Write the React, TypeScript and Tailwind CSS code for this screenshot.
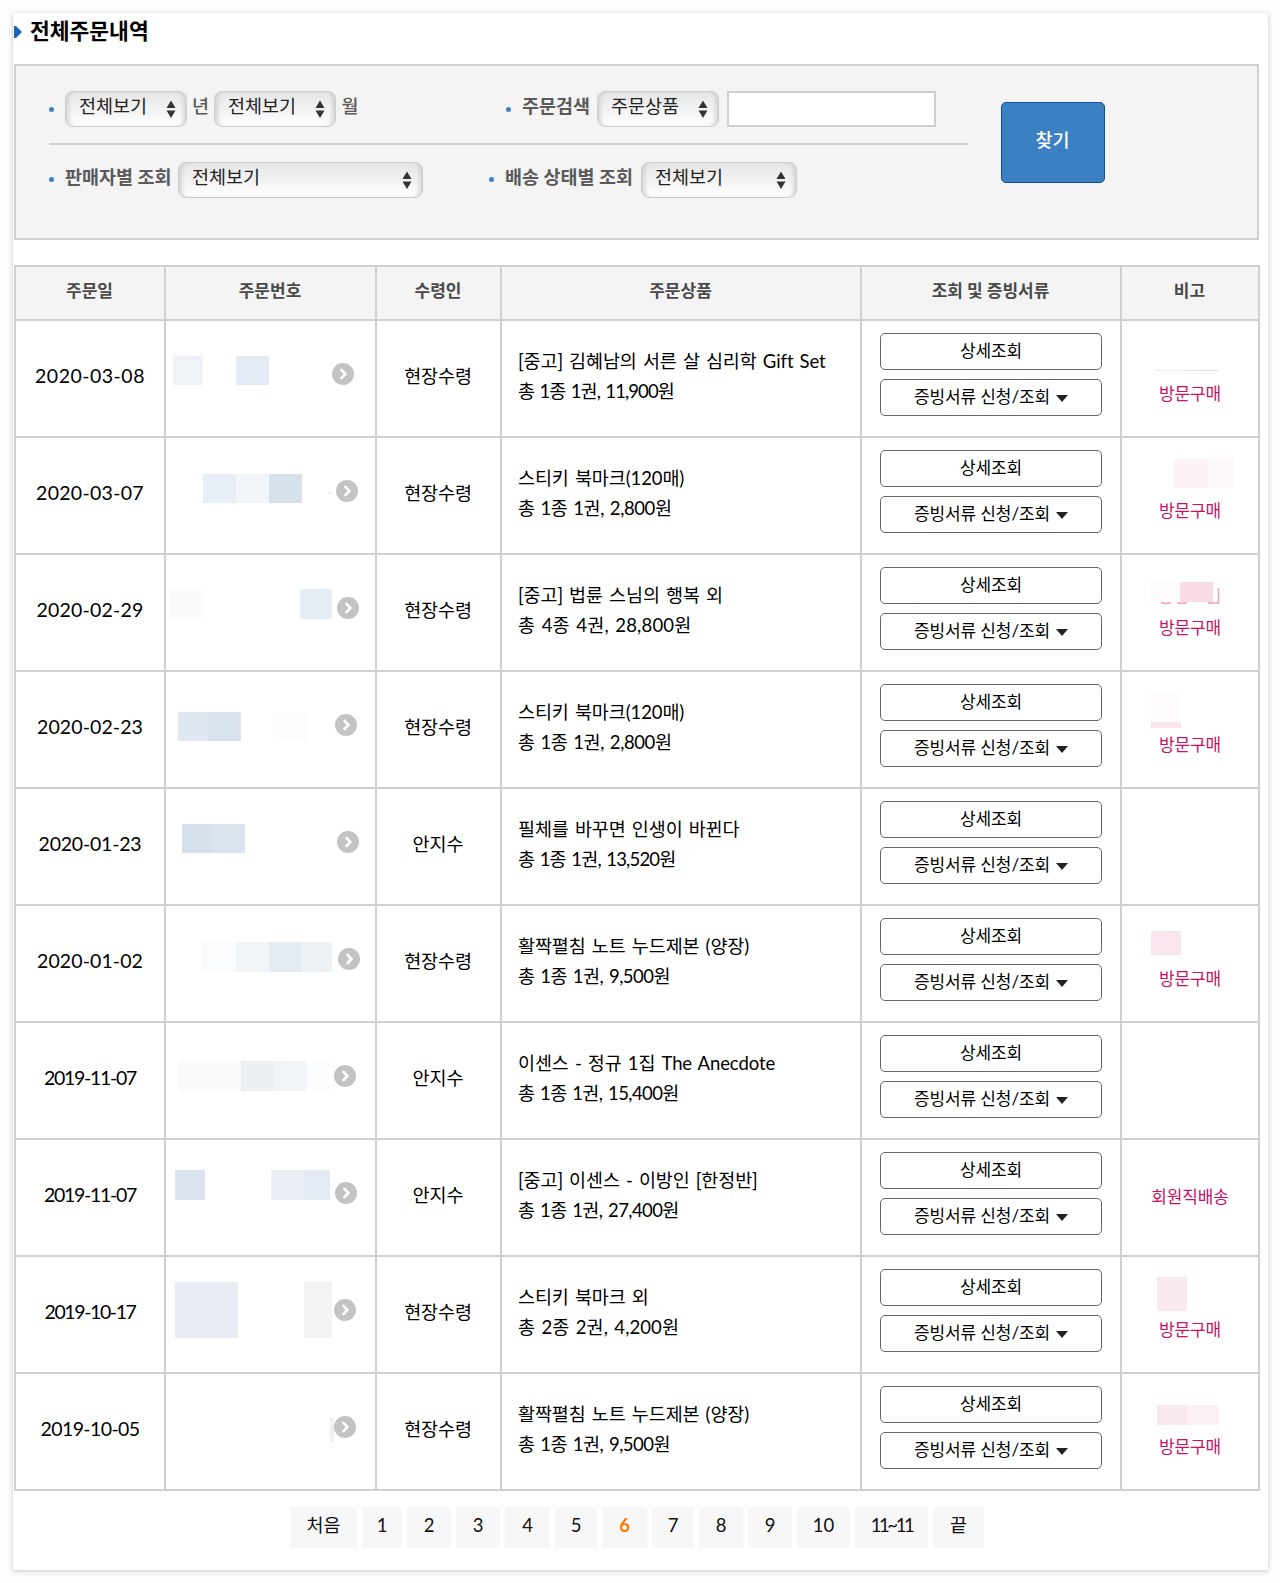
import React from 'react';

// x, y, width, height, colour
type Block = [number, number, number, number, string];

interface Order {
  date: string;
  dateTracking: string;
  arrow: number;
  blocks: Block[];
  receiver: string;
  title: string;
  summary: string;
  summaryTracking: string;
  note?: string;
  noteBlocks?: Block[];
  noteTrace?: boolean;
}

const ORDERS: Order[] = [
  {
    date: '2020-03-08', dateTracking: 'tracking-[0.5px]', arrow: 166,
    blocks: [[7, 35, 30, 29, '#eff3f8'], [70, 35, 33, 29, '#e4ebf4']],
    receiver: '현장수령',
    title: '[중고] 김혜남의 서른 살 심리학 Gift Set',
    summary: '총 1종 1권, 11,900원', summaryTracking: 'tracking-[-0.9px]',
    note: '방문구매',
    noteBlocks: [[33, 49, 30, 1, '#fbe6ee'], [63, 49, 33, 1, '#f8d3e1']],
  },
  {
    date: '2020-03-07', dateTracking: 'tracking-[0.3px]', arrow: 170,
    blocks: [[37, 36, 33, 29, '#e8eef5'], [70, 36, 33, 29, '#f2f5f9'], [103, 36, 33, 29, '#d6e1eb'], [163, 54, 2, 2, '#e6e9f4']],
    receiver: '현장수령',
    title: '스티키 북마크(120매)',
    summary: '총 1종 1권, 2,800원', summaryTracking: 'tracking-[-0.4px]',
    note: '방문구매',
    noteBlocks: [[52, 21, 33, 29, '#fcf2f6'], [85, 21, 27, 29, '#fdf9fb']],
  },
  {
    date: '2020-02-29', dateTracking: 'tracking-[0.2px]', arrow: 171,
    blocks: [[5, 34, 30, 30, '#f9fafc'], [134, 34, 32, 30, '#e5edf5']],
    receiver: '현장수령',
    title: '[중고] 법륜 스님의 행복 외',
    summary: '총 4종 4권, 28,800원', summaryTracking: 'tracking-[0.2px]',
    note: '방문구매',
    noteBlocks: [[29, 27, 29, 20, '#fdfafc'], [58, 27, 33, 20, '#f9dce8']],
    noteTrace: true,
  },
  {
    date: '2020-02-23', dateTracking: 'tracking-[0.1px]', arrow: 169,
    blocks: [[12, 40, 30, 29, '#dfe7f0'], [42, 40, 33, 29, '#d8e2ec'], [107, 40, 34, 30, '#fbfcfe']],
    receiver: '현장수령',
    title: '스티키 북마크(120매)',
    summary: '총 1종 1권, 2,800원', summaryTracking: 'tracking-[-0.4px]',
    note: '방문구매',
    noteBlocks: [[29, 20, 30, 29, '#fdfbfc'], [29, 50, 30, 6, '#f9e3ec']],
  },
  {
    date: '2020-01-23', dateTracking: 'tracking-[-0.2px]', arrow: 171,
    blocks: [[16, 35, 30, 29, '#d6e0ea'], [46, 35, 33, 29, '#dae4ed']],
    receiver: '안지수',
    title: '필체를 바꾸면 인생이 바뀐다',
    summary: '총 1종 1권, 13,520원', summaryTracking: 'tracking-[-0.8px]',
  },
  {
    date: '2020-01-02', dateTracking: 'tracking-[0.1px]', arrow: 172,
    blocks: [[36, 36, 34, 30, '#fafbfd'], [70, 36, 33, 30, '#f1f5f8'], [103, 36, 32, 30, '#e2eaf2'], [135, 36, 31, 30, '#edf2f7']],
    receiver: '현장수령',
    title: '활짝펼침 노트 누드제본 (양장)',
    summary: '총 1종 1권, 9,500원', summaryTracking: 'tracking-[-0.5px]',
    note: '방문구매',
    noteBlocks: [[29, 25, 30, 24, '#f9e6ee']],
  },
  {
    date: '2019-11-07', dateTracking: 'tracking-[-1.3px]', arrow: 168,
    blocks: [[12, 38, 63, 30, '#f9fafc'], [75, 38, 33, 30, '#ebf0f5'], [108, 38, 32, 30, '#f1f4f9'], [140, 38, 24, 30, '#fafcfe']],
    receiver: '안지수',
    title: '이센스 - 정규 1집 The Anecdote',
    summary: '총 1종 1권, 15,400원', summaryTracking: 'tracking-[-0.6px]',
  },
  {
    date: '2019-11-07', dateTracking: 'tracking-[-1.3px]', arrow: 169,
    blocks: [[9, 30, 30, 30, '#dbe4ee'], [105, 30, 33, 30, '#ebf0f6'], [138, 30, 26, 30, '#e3eaf3']],
    receiver: '안지수',
    title: '[중고] 이센스 - 이방인 [한정반]',
    summary: '총 1종 1권, 27,400원', summaryTracking: 'tracking-[-0.6px]',
    note: '회원직배송',
  },
  {
    date: '2019-10-17', dateTracking: 'tracking-[-1.4px]', arrow: 168,
    blocks: [[9, 25, 63, 56, '#e8ecf5'], [138, 25, 28, 56, '#f3f3f3']],
    receiver: '현장수령',
    title: '스티키 북마크 외',
    summary: '총 2종 2권, 4,200원', summaryTracking: 'tracking-[0.1px]',
    note: '방문구매',
    noteBlocks: [[35, 20, 30, 34, '#fae9f0']],
  },
  {
    date: '2019-10-05', dateTracking: 'tracking-[-0.6px]', arrow: 168,
    blocks: [[164, 44, 4, 24, '#f0f0f0']],
    receiver: '현장수령',
    title: '활짝펼침 노트 누드제본 (양장)',
    summary: '총 1종 1권, 9,500원', summaryTracking: 'tracking-[-0.5px]',
    note: '방문구매',
    noteBlocks: [[35, 31, 30, 20, '#fae8f0'], [65, 31, 32, 20, '#fbf1f5']],
  },
];

const PAGES = [
  { label: '처음', width: 'w-[67px]' },
  { label: '1', width: 'w-[40px]' },
  { label: '2', width: 'w-[44px]' },
  { label: '3', width: 'w-[44px]' },
  { label: '4', width: 'w-[45px]' },
  { label: '5', width: 'w-[42px]' },
  { label: '6', width: 'w-[45px]' },
  { label: '7', width: 'w-[42px]' },
  { label: '8', width: 'w-[44px]' },
  { label: '9', width: 'w-[44px]' },
  { label: '10', width: 'w-[53px]' },
  { label: '11~11', width: 'w-[73px] tracking-[-2.4px]' },
  { label: '끝', width: 'w-[51px]' },
];

const HEADERS = ['주문일', '주문번호', '수령인', '주문상품', '조회 및 증빙서류', '비고'];

const Dot = () => <span className="h-[5px] w-[5px] shrink-0 rounded-full bg-[#4682c3]" />;

const SelectBox = ({ label, className }: { label: string; className: string }) => (
  <button
    className={`flex h-9 shrink-0 items-center justify-between rounded-lg border border-[#cdcdcd] bg-linear-to-b from-[#e6e6e6] to-white pr-[10px] pl-[13px] text-[18.5px] font-normal tracking-normal text-[#222] shadow-[inset_5px_0_5px_-3px_#cccccc,inset_-5px_0_5px_-3px_#cccccc] ${className}`}
  >
    <span className="-mt-1">{label}</span>
    <svg width="10" height="18" viewBox="0 0 10 18" fill="#333">
      <path d="M5 0.5 9.5 8h-9zM5 18 .5 10.5h9z" />
    </svg>
  </button>
);

const Mosaic = ({ blocks, width }: { blocks: Block[]; width: number }) => (
  <svg width={width} height="115" className="shrink-0" shapeRendering="crispEdges">
    {blocks.map(([x, y, w, h, fill]) => (
      <rect key={`${x}-${y}`} x={x} y={y} width={w} height={h} fill={fill} />
    ))}
  </svg>
);

const ArrowIcon = () => (
  <svg width="22" height="22" viewBox="0 0 22 22" className="-mt-[9px] shrink-0">
    <circle cx="11" cy="11" r="11" fill="#c3c3c3" />
    <path d="M8.7 6.2 13.4 11l-4.7 4.8" fill="none" stroke="#fff" strokeWidth="2.6" />
  </svg>
);

const OrderRow = ({ order }: { order: Order }) => (
  <tr className="h-[117px] *:border-2 *:border-[#d0d0d0] *:p-0">
    <td className="pb-[6px]! text-center">
      <span className={`text-[19.5px] ${order.dateTracking}`}>{order.date}</span>
    </td>
    <td>
      <div className="flex h-[115px] items-center">
        <Mosaic blocks={order.blocks} width={order.arrow} />
        <ArrowIcon />
      </div>
    </td>
    <td className="pr-px! pb-[4px]! text-center">
      <span className="text-[18.5px] tracking-[-0.1px]">{order.receiver}</span>
    </td>
    <td>
      <div className="-mt-1 ml-4 text-[18.5px] leading-[29.5px] whitespace-nowrap [word-spacing:1.5px]">
        <p className="tracking-[-0.1px]">{order.title}</p>
        <p className={order.summaryTracking}>{order.summary}</p>
      </div>
    </td>
    <td>
      <div className="flex h-[115px] flex-col items-center gap-[9px] pt-3 text-[17px] tracking-[-0.1px]">
        <button className="h-[37px] w-[222px] rounded-[5px] border border-[#666] pb-[2px]">상세조회</button>
        <button className="flex h-[37px] w-[222px] items-center justify-center gap-[6px] rounded-[5px] border border-[#666] pb-[2px]">
          증빙서류 신청/조회
          <svg width="12" height="7" viewBox="0 0 12 7" className="mt-[3px]">
            <path d="M0 0h12L6 7z" fill="#222" />
          </svg>
        </button>
      </div>
    </td>
    <td>
      <div className="relative flex h-[115px] items-center justify-center text-[17px] tracking-[-0.1px] text-[#cc1163]">
        {order.noteBlocks && (
          <div className="absolute inset-0">
            <Mosaic blocks={order.noteBlocks} width={135} />
          </div>
        )}
        {order.noteTrace && (
          <svg width="135" height="115" className="absolute inset-0" fill="none" stroke="#ee9fc0" strokeWidth="1.5">
            <path d="M39 47.5q5 2 10 0M55 47.5q5 2 10 0M86 48h10M96.500 33v16" />
          </svg>
        )}
        <span className={order.noteBlocks ? 'mt-[30px]' : '-mt-[2px]'}>{order.note}</span>
      </div>
    </td>
  </tr>
);

export default function App() {
  return (
    <div className="h-[1583px] w-[1280px] bg-[#fdfdfd] pt-[13px] pl-[13px] font-[Lato,'Noto_Sans_CJK_KR',sans-serif] text-black">
      <div className="h-[1557px] w-[1255px] bg-white pl-px shadow-[0_1px_5px_rgba(0,0,0,0.22)]">
        {/* Title */}
        <div className="flex h-[51px] items-start gap-[8px]">
          <svg width="8" height="12" viewBox="0 0 8 12" className="mt-[13px]">
            <path d="M0 0h2l6 6-6 6H0z" fill="#1b66b8" />
          </svg>
          <h1 className="mt-[2px] text-[21.5px] leading-8 font-bold">전체주문내역</h1>
        </div>

        {/* Search filters */}
        <div className="flex h-[176px] w-[1245px] items-start border-2 border-[#d0d0d0] bg-[#f4f4f4]">
          <div className="ml-[33px] w-[919px] text-[18.5px] font-bold text-[#5a5a5a]">
            <div className="flex h-[79px] items-center border-b-2 border-[#d0d0d0] pt-[9px]">
              <Dot />
              <SelectBox label="전체보기" className="ml-[11px] w-[122px]" />
              <span className="-mt-1 w-[27px] text-center font-medium">년</span>
              <SelectBox label="전체보기" className="w-[122px]" />
              <span className="-mt-1 w-[28px] text-center font-medium">월</span>
              <div className="ml-[142px] flex items-center">
                <Dot />
                <span className="-mt-1 ml-[11px] w-[75px]">주문검색</span>
                <SelectBox label="주문상품" className="w-[122px]" />
                <input className="ml-2 h-9 w-[209px] border-2 border-[#d0d0d0] bg-white" />
              </div>
            </div>
            <div className="flex h-[69px] items-center">
              <Dot />
              <span className="-mt-1 ml-[11px] w-[113px]">판매자별 조회</span>
              <SelectBox label="전체보기" className="w-[245px]" />
              <div className="ml-[66px] flex items-center">
                <Dot />
                <span className="-mt-1 ml-[11px] w-[136px]">배송 상태별 조회</span>
                <SelectBox label="전체보기" className="w-[156px]" />
              </div>
            </div>
          </div>
          <button className="mt-9 ml-[33px] h-[81px] w-[104px] rounded-[5px] border border-[#0a509c] bg-[#3c80c4] pr-px pb-[3px] text-[18.5px] font-medium text-white">
            찾기
          </button>
        </div>

        {/* Order list */}
        <table className="mt-[25px] w-[1245px] table-fixed border-collapse">
          <colgroup>
            <col className="w-[150px]" />
            <col className="w-[211px]" />
            <col className="w-[125px]" />
            <col className="w-[360px]" />
            <col className="w-[260px]" />
            <col className="w-[138px]" />
          </colgroup>
          <thead>
            <tr className="h-[54px] bg-[#f4f4f4] text-[17px] text-[#4a4a4a]">
              {HEADERS.map((header) => (
                <th key={header} className="border-2 border-[#d0d0d0] p-0 pr-px pb-1 font-bold">
                  {header}
                </th>
              ))}
            </tr>
          </thead>
          <tbody>
            {ORDERS.map((order, i) => (
              <OrderRow key={i} order={order} />
            ))}
          </tbody>
        </table>

        {/* Pagination */}
        <div className="mt-[16px] ml-[276px] flex gap-[5px]">
          {PAGES.map(({ label, width }) => (
            <button
              key={label}
              className={`h-[41px] bg-[#f7f7f7] pb-[3px] text-[18.5px] ${width} ${
                label === '6' ? 'font-bold text-[#ff7a00]' : 'text-[#111]'
              }`}
            >
              {label}
            </button>
          ))}
        </div>
      </div>
    </div>
  );
}
